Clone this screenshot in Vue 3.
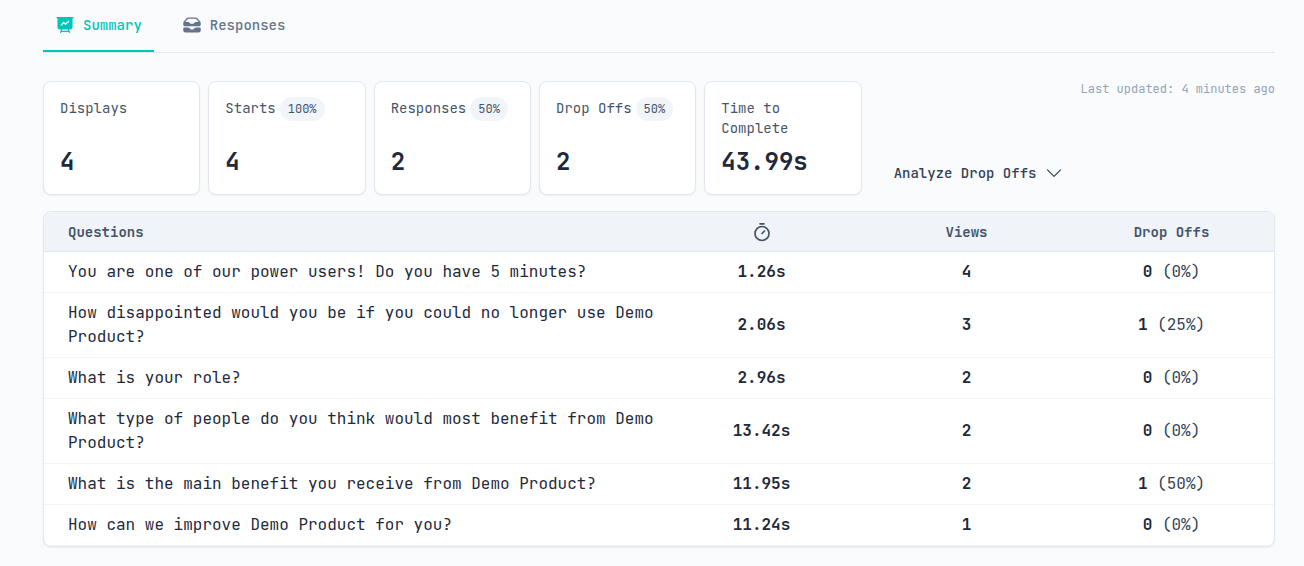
<script setup>
const stats = [
  { label: 'Displays', value: '4' },
  { label: 'Starts', badge: '100%', value: '4' },
  { label: 'Responses', badge: '50%', value: '2' },
  { label: 'Drop Offs', badge: '50%', value: '2' },
  { label: 'Time to Complete', value: '43.99s' },
]

const questions = [
  { text: 'You are one of our power users! Do you have 5 minutes?', time: '1.26s', views: 4, drops: 0, rate: '0%' },
  { text: 'How disappointed would you be if you could no longer use Demo Product?', time: '2.06s', views: 3, drops: 1, rate: '25%' },
  { text: 'What is your role?', time: '2.96s', views: 2, drops: 0, rate: '0%' },
  { text: 'What type of people do you think would most benefit from Demo Product?', time: '13.42s', views: 2, drops: 0, rate: '0%' },
  { text: 'What is the main benefit you receive from Demo Product?', time: '11.95s', views: 2, drops: 1, rate: '50%' },
  { text: 'How can we improve Demo Product for you?', time: '11.24s', views: 1, drops: 0, rate: '0%' },
]
</script>

<template>
  <main class="page">
    <nav class="tabs" aria-label="Survey results">
      <a href="#summary" class="tab active" aria-current="page">
        <svg class="tab-icon" viewBox="0 0 24 24" fill="currentColor" aria-hidden="true">
          <path fill-rule="evenodd" d="M2.25 2.25a.75.75 0 0 0 0 1.5H3v10.5a3 3 0 0 0 3 3h1.21l-1.172 3.513a.75.75 0 0 0 1.424.474l.329-.987h8.418l.33.987a.75.75 0 0 0 1.422-.474l-1.17-3.513H18a3 3 0 0 0 3-3V3.75h.75a.75.75 0 0 0 0-1.5H2.25Zm6.54 15h6.42l.5 1.5H8.29l.5-1.5Zm8.085-8.995a.75.75 0 1 0-.75-1.299 12.81 12.81 0 0 0-3.558 3.05L11.03 8.47a.75.75 0 0 0-1.06 0l-3 3a.75.75 0 1 0 1.06 1.06l2.47-2.47 1.617 1.618a.75.75 0 0 0 1.146-.102 11.312 11.312 0 0 1 3.612-3.321Z" />
        </svg>
        Summary
      </a>
      <a href="#responses" class="tab">
        <svg class="tab-icon" viewBox="0 0 24 24" fill="currentColor" aria-hidden="true">
          <path fill-rule="evenodd" d="M1.5 9.832v1.793c0 1.036.84 1.875 1.875 1.875h17.25c1.035 0 1.875-.84 1.875-1.875V9.832a3 3 0 0 0-.722-1.952l-3.285-3.832A3 3 0 0 0 16.215 3h-8.43a3 3 0 0 0-2.278 1.048L2.222 7.88A3 3 0 0 0 1.5 9.832ZM7.785 4.5a1.5 1.5 0 0 0-1.139.524L3.881 8.25h3.165a3 3 0 0 1 2.496 1.336l.164.246a1.5 1.5 0 0 0 1.248.668h2.092a1.5 1.5 0 0 0 1.248-.668l.164-.246a3 3 0 0 1 2.496-1.336h3.165l-2.765-3.226a1.5 1.5 0 0 0-1.139-.524h-8.43Z" />
          <path d="M2.813 15c-.725 0-1.313.588-1.313 1.313V18a3 3 0 0 0 3 3h15a3 3 0 0 0 3-3v-1.688c0-.724-.588-1.312-1.313-1.312h-4.233a3 3 0 0 0-2.496 1.336l-.164.246a1.5 1.5 0 0 1-1.248.668h-2.092a1.5 1.5 0 0 1-1.248-.668l-.164-.246A3 3 0 0 0 7.046 15H2.812Z" />
        </svg>
        Responses
      </a>
    </nav>

    <section class="overview" aria-label="Overview">
      <div class="stats">
        <article v-for="stat in stats" :key="stat.label" class="card stat">
          <p class="stat-label">
            {{ stat.label }}<span v-if="stat.badge" class="badge">{{ stat.badge }}</span>
          </p>
          <p class="stat-value">{{ stat.value }}</p>
        </article>
      </div>
      <div class="side">
        <p class="updated">Last updated: 4 minutes ago</p>
        <button type="button" class="analyze">
          Analyze Drop Offs
          <svg class="chevron" viewBox="0 0 16 16" fill="none" stroke="currentColor" stroke-width="1.2" stroke-linecap="round" stroke-linejoin="round" aria-hidden="true">
            <path d="M1.5 4.8 8 11.3l6.5-6.5" />
          </svg>
        </button>
      </div>
    </section>

    <div class="card table-card">
      <table class="questions">
        <thead>
          <tr>
            <th scope="col" class="question">Questions</th>
            <th scope="col" aria-label="Time">
              <svg class="timer" viewBox="0 0 20 20" fill="none" stroke="currentColor" stroke-width="1.7" stroke-linecap="round" aria-hidden="true">
                <path d="M8 1.8h4M10 11.5l2.5-2.5" />
                <circle cx="10" cy="11.5" r="7" />
              </svg>
            </th>
            <th scope="col">Views</th>
            <th scope="col">Drop Offs</th>
          </tr>
        </thead>
        <tbody>
          <tr v-for="item in questions" :key="item.text">
            <td class="question">{{ item.text }}</td>
            <td><strong>{{ item.time }}</strong></td>
            <td><strong>{{ item.views }}</strong></td>
            <td><strong>{{ item.drops }}</strong> ({{ item.rate }})</td>
          </tr>
        </tbody>
      </table>
    </div>
  </main>
</template>

<style>
body {
  background: #f9fbfd;
}
</style>

<style scoped>
.page {
  box-sizing: border-box;
  padding: 0 29px 16px 43px;
  color: #1e293b;
  font-family: "JetBrains Mono", "DejaVu Sans Mono", "Liberation Mono", monospace;
  font-size: 16px;
  line-height: 24px;
}

p {
  margin: 0;
}

.tabs {
  display: flex;
  gap: 16px;
  height: 52px;
  border-bottom: 1px solid #e2e8f0;
}

.tab {
  box-sizing: border-box;
  display: flex;
  align-items: center;
  gap: 8px;
  padding: 0 12px;
  color: #64748b;
  font-size: 14px;
  line-height: 20px;
  font-weight: 500;
  text-decoration: none;
  border-bottom: 2px solid transparent;
}

.tab.active {
  border-color: #00c4b8;
  color: #00c4b8;
}

.tab-icon {
  width: 20px;
  height: 20px;
}

.overview {
  display: grid;
  grid-template-columns: 2fr 1fr;
  gap: 4px;
  margin-top: 28px;
}

.stats {
  display: grid;
  grid-template-columns: repeat(5, minmax(0, 1fr));
  gap: 8px;
}

.card {
  border: 1px solid #e2e8f0;
  border-radius: 8px;
  background: #fff;
  box-shadow: 0 1px 2px rgba(15, 23, 42, 0.06);
}

.stat {
  display: flex;
  flex-direction: column;
  justify-content: space-between;
  gap: 8px;
  padding: 16px;
}

.stat-label {
  color: #475569;
  font-size: 14px;
  line-height: 20px;
}

.badge {
  margin-left: 4px;
  padding: 4px 8px;
  border-radius: 12px;
  background: #f1f5f9;
  font-size: 12px;
  line-height: 16px;
}

.stat-value {
  font-size: 24px;
  line-height: 32px;
  font-weight: 700;
}

.side {
  display: flex;
  flex-direction: column;
  justify-content: space-between;
}

.updated {
  color: #94a3b8;
  font-size: 12px;
  line-height: 16px;
  text-align: right;
}

.analyze {
  display: flex;
  align-items: center;
  align-self: flex-start;
  gap: 10px;
  margin-left: 16px;
  padding: 12px;
  border: 0;
  background: none;
  color: #334155;
  font: inherit;
  font-size: 14px;
  line-height: 20px;
  font-weight: 500;
  cursor: pointer;
}

.chevron {
  width: 16px;
  height: 16px;
}

.table-card {
  margin-top: 16px;
  overflow: hidden;
}

.questions {
  width: 100%;
  table-layout: fixed;
  border-collapse: separate;
  border-spacing: 0;
}

th,
td {
  padding: 8px 0;
  border-bottom: 1px solid #f1f5f9;
  text-align: center;
}

th {
  border-bottom-color: #e2e8f0;
  background: #f0f4f8;
  color: #475569;
  font-size: 14px;
  line-height: 20px;
  font-weight: 600;
}

.question {
  box-sizing: border-box;
  width: 50%;
  padding-left: 24px;
  text-align: left;
}

th.question {
  height: 40px;
}

td {
  color: #334155;
}

td.question,
strong {
  color: #1e293b;
}

strong {
  font-weight: 600;
}

.timer {
  display: block;
  width: 20px;
  height: 20px;
  margin: 0 auto;
}
</style>
